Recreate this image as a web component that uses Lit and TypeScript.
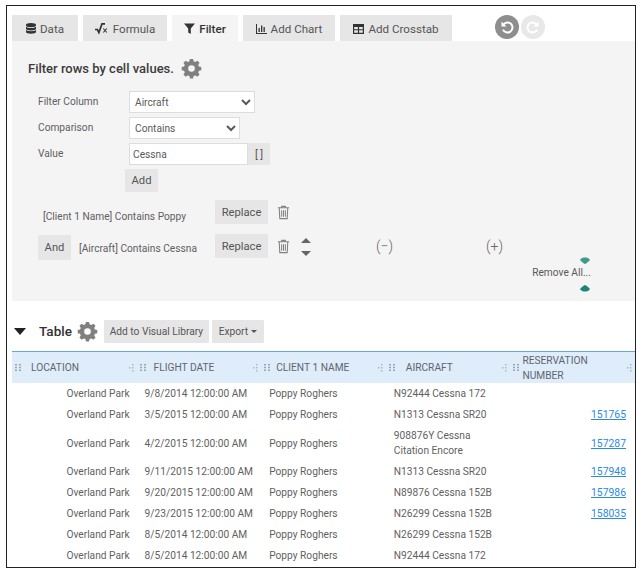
import { LitElement, html, css, svg } from 'lit';
import { customElement } from 'lit/decorators.js';

const gear = svg`<path d="M10.2 1h3.6l.6 2.700 1.900.8 2.400-1.500 2.500 2.500-1.500 2.400.8 1.900 2.700.6v3.600l-2.700.6-.8 1.900 1.500 2.400-2.500 2.500-2.400-1.500-1.900.8-.6 2.700h-3.600l-.6-2.700-1.900-.8-2.400 1.500-2.500-2.500 1.500-2.400-.8-1.900-2.700-.6v-3.600l2.700-.6.8-1.900-1.500-2.400 2.500-2.500 2.400 1.500 1.900-.8zM12 8.200a3.800 3.800 0 1 0 0 7.600 3.800 3.800 0 0 0 0-7.600z" fill-rule="evenodd"/>`;

const trash = html`<svg class="trash" viewBox="0 0 14 16" width="13" height="15">
  <path d="M1 3h12M5 3V1.400h4V3M2.400 3l.6 11.600h8L11.600 3M5 5.500v7M7 5.500v7M9 5.500v7" fill="none" stroke="#808080" stroke-width="1.100"/>
</svg>`;

const grip = html`<svg class="grip" viewBox="0 0 6 7" width="6" height="7">
  <path d="M0 0h2v1.500H0zM4 0h2v1.500H4zM0 2.700h2v1.500H0zM4 2.700h2v1.500H4zM0 5.400h2v1.500H0zM4 5.400h2v1.500H4z" fill="#9aa6b1"/>
</svg>`;

const resize = html`<svg class="resize" viewBox="0 0 5 8" width="5" height="8">
  <path d="M3 0h1.500v1.500H3zM3 3h1.500v1.500H3zM3 6h1.500v1.500H3zM0 3h1.500v1.500H0z" fill="#adb7c0"/>
</svg>`;

const rows = [
  ['9/8/2014 12:00:00 AM', 'N92444 Cessna 172', ''],
  ['3/5/2015 12:00:00 AM', 'N1313 Cessna SR20', '151765'],
  ['4/2/2015 12:00:00 AM', '908876Y Cessna Citation Encore', '157287'],
  ['9/11/2015 12:00:00 AM', 'N1313 Cessna SR20', '157948'],
  ['9/20/2015 12:00:00 AM', 'N89876 Cessna 152B', '157986'],
  ['9/23/2015 12:00:00 AM', 'N26299 Cessna 152B', '158035'],
  ['8/5/2014 12:00:00 AM', 'N26299 Cessna 152B', ''],
  ['8/5/2014 12:00:00 AM', 'N92444 Cessna 172', ''],
];

const columns = ['LOCATION', 'FLIGHT DATE', 'CLIENT 1 NAME', 'AIRCRAFT', 'RESERVATION NUMBER'];

@customElement('app-root')
export class AppRoot extends LitElement {
  static styles = css`
    :host {
      display: block;
      width: 644px;
      height: 572px;
      padding: 5px 8px 4px 6px;
      box-sizing: border-box;
      font-family: Roboto, "Liberation Sans", sans-serif;
      font-size: 10.2px;
      color: #5a5a5a;
    }
    .frame {
      height: 100%;
      box-sizing: border-box;
      border: 1px solid #222;
      padding: 9px 0 0 5px;
      overflow: hidden;
    }

    /* Tabs */
    .tabs {
      display: flex;
      height: 26px;
      gap: 5px;
    }
    .tab {
      display: flex;
      align-items: center;
      justify-content: center;
      gap: 4px;
      background: #e6e6e6;
      font-size: 11.6px;
      color: #555;
      padding-top: 1px;
      box-sizing: border-box;
    }
    .tab.active {
      background: #f4f4f4;
      color: #333;
      font-weight: 500;
    }
    .tab svg { fill: #333; }
    .history {
      display: flex;
      gap: 2px;
      margin-left: 38px;
      height: 24px;
    }
    .round {
      width: 24px;
      height: 24px;
      border-radius: 50%;
      background: #8e8e8e;
      display: flex;
      align-items: center;
      justify-content: center;
    }
    .round.off { background: #e8e8e8; }

    /* Filter panel */
    .panel {
      height: 260px;
      box-sizing: border-box;
      background: #f4f4f4;
      padding: 16px 0 0 16px;
      display: flex;
      flex-direction: column;
    }
    .title {
      display: flex;
      align-items: center;
      gap: 7px;
      height: 22px;
      font-size: 13px;
      font-weight: 500;
      color: #3c3c3c;
    }
    .gear { fill: #808080; }
    .form {
      display: grid;
      grid-template-columns: 91px auto;
      row-gap: 4px;
      margin: 12px 0 0 10px;
      justify-content: start;
    }
    .form label { line-height: 21px; color: #606060; }
    select, .input {
      height: 22px;
      box-sizing: border-box;
      border: 1px solid #ddd;
      background: #fff;
      font: inherit;
      color: #5a5a5a;
      padding: 0 0 0 1px;
      border-radius: 0;
    }
    .wide { width: 126px; }
    .narrow { width: 111px; }
    .value-row { display: flex; }
    .input { width: 119px; padding-left: 3px; line-height: 21px; }
    button {
      border: none;
      background: #e6e6e6;
      font: inherit;
      font-size: 11.2px;
      color: #555;
      padding: 0;
      border-radius: 1px;
    }
    .bracket { width: 22px; height: 22px; font-size: 10.5px; }
    .add { width: 33px; height: 23px; margin: 0 0 0 -4px; display: block; }

    .rule {
      display: flex;
      align-items: flex-start;
      margin-left: 10px;
      color: #606060;
    }
    .rule.first { margin-top: 8px; height: 24px; }
    .rule.second { margin-top: 11px; height: 26px; }
    .rule .text-one { margin-left: 5px; width: 172px; padding-top: 11px; }
    .rule .text-two { margin-left: 8px; width: 136px; padding-top: 8px; }
    .replace { width: 53px; height: 24px; }
    .rule.second .replace { margin-top: -1px; }
    .rule .trash { margin: 5px 0 0 9px; }
    .rule.second .trash { margin-top: 4px; }
    .sort { display: flex; flex-direction: column; gap: 8px; margin: 3px 0 0 11px; }
    .paren { color: #666; font-size: 14px; font-weight: 300; width: 16px; text-align: center; margin-top: 3px; }
    .minus { margin-left: 65px; }
    .plus { margin-left: 94px; }
    .remove {
      align-self: flex-end;
      display: flex;
      flex-direction: column;
      align-items: flex-end;
      margin: -4px 44px 0 0;
    }
    .remove span { margin: 3px 0 7px; }
    .remove svg { margin-right: 1px; }

    /* Table */
    .tools {
      display: flex;
      align-items: center;
      height: 23px;
      margin-top: 19px;
    }
    .caret { margin: 0 13px 0 2px; }
    .table-name { font-size: 13.5px; font-weight: 500; color: #333; margin: 0 5px 2px 0; }
    .tools button { height: 23px; font-size: 10.2px; }
    .library { width: 105px; margin: 0 3px 0 6px; }
    .export { width: 52px; }
    .export::after {
      content: "";
      display: inline-block;
      margin-left: 3px;
      vertical-align: 2px;
      border: 3px solid transparent;
      border-top-color: #555;
      border-bottom: none;
    }
    table {
      width: 623px;
      margin-top: 8px;
      border-collapse: collapse;
      table-layout: fixed;
    }
    th {
      height: 31px;
      padding: 0;
      background: #dfecfa;
      border-top: 1px solid #6aa5d8;
      font-weight: 400;
      font-size: 10.2px;
      line-height: 15px;
      color: #5e6670;
      text-align: left;
    }
    .head {
      display: flex;
      align-items: center;
      padding-left: 3px;
      padding-right: 3px;
    }
    .head .grip { flex: none; margin-right: 8px; }
    .head .name { flex: 1; }
    th:nth-child(1) .grip { margin-right: 10px; }
    th:nth-child(3) .grip { margin-right: 6px; }
    th:nth-child(4) .grip { margin-right: 11px; }
    th:nth-child(5) .grip { margin-right: 3px; }
    td {
      padding: 3px 8px;
      height: 15px;
      line-height: 15px;
      font-size: 10.2px;
      color: #5f5f5f;
      vertical-align: middle;
    }
    td.city { text-align: right; padding-right: 7px; }
    td.num { text-align: right; padding-right: 9px; }
    td.date { white-space: nowrap; }
    a { color: #2b8ae6; text-decoration: underline; font-size: 10.4px; }
  `;

  render() {
    return html`<div class="frame">
      <nav class="tabs">
        <div class="tab" style="width:66px">
          <svg viewBox="0 0 10 11" width="10" height="11"><path d="M5 0c2.800 0 5 .8 5 1.800v.7C10 3.500 7.800 4.200 5 4.200S0 3.500 0 2.500v-.7C0 .8 2.200 0 5 0zM0 3.800c1 .8 3 1.200 5 1.200s4-.4 5-1.200v2C10 6.700 7.800 7.400 5 7.400S0 6.700 0 5.800zM0 7c1 .8 3 1.200 5 1.200S9 7.800 10 7v2c0 1-2.200 1.700-5 1.700S0 10 0 9z"/></svg>
          Data
        </div>
        <div class="tab" style="width:84px">
          <svg viewBox="0 0 14 12" width="14" height="12"><path d="M0 6.500h2.400l1.500 3L7 .8h3" fill="none" stroke="#333" stroke-width="1.700"/><path d="M8.300 5.500l3.500 4M11.800 5.500l-3.500 4" stroke="#333" stroke-width="1.100"/></svg>
          Formula
        </div>
        <div class="tab active" style="width:66px">
          <svg viewBox="0 0 11 11" width="11" height="11"><path d="M0 .5h11L6.800 5.400V11L4.200 9.500V5.400z"/></svg>
          Filter
        </div>
        <div class="tab" style="width:92px">
          <svg viewBox="0 0 11 10" width="11" height="10"><path d="M0 0h1v9h10v1H0zM2.500 4h1.300v4H2.500zM5 1.500h1.300V8H5zM7.500 3h1.300v5H7.500z"/></svg>
          Add Chart
        </div>
        <div class="tab" style="width:112px">
          <svg viewBox="0 0 11 10" width="11" height="10"><path fill-rule="evenodd" d="M0 0h11v10H0zM1.200 3v2.200h3.700V3zM6.100 3v2.200h3.700V3zM1.200 6.300v2.500h3.700V6.300zM6.100 6.300v2.500h3.700V6.300z"/></svg>
          Add Crosstab
        </div>
        <div class="history">
          <div class="round">
            <svg viewBox="0 0 14 14" width="14" height="14"><path d="M3.500 4.500A5 5 0 1 1 3 9.600" fill="none" stroke="#fff" stroke-width="2"/><path d="M1.500 1.500v5h5z" fill="#fff"/></svg>
          </div>
          <div class="round off">
            <svg viewBox="0 0 14 14" width="14" height="14"><path d="M10.500 4.500A5 5 0 1 0 11 9.600" fill="none" stroke="#fff" stroke-width="2"/><path d="M12.500 1.500v5h-5z" fill="#fff"/></svg>
          </div>
        </div>
      </nav>

      <section class="panel">
        <div class="title">
          Filter rows by cell values.
          <svg class="gear" viewBox="0 0 24 24" width="21" height="21">${gear}</svg>
        </div>
        <div class="form">
          <label>Filter Column</label>
          <select class="wide"><option>Aircraft</option></select>
          <label>Comparison</label>
          <select class="narrow"><option>Contains</option></select>
          <label>Value</label>
          <div class="value-row">
            <div class="input">Cessna</div>
            <button class="bracket">[ ]</button>
          </div>
          <span></span>
          <button class="add">Add</button>
        </div>

        <div class="rule first">
          <span class="text-one">[Client 1 Name] Contains Poppy</span>
          <button class="replace">Replace</button>
          ${trash}
        </div>
        <div class="rule second">
          <button style="width:33px;height:25px">And</button>
          <span class="text-two">[Aircraft] Contains Cessna</span>
          <button class="replace">Replace</button>
          ${trash}
          <div class="sort">
            <svg viewBox="0 0 10 5" width="10" height="5"><path d="M5 0l5 5H0z" fill="#666"/></svg>
            <svg viewBox="0 0 10 5" width="10" height="5"><path d="M5 5L0 0h10z" fill="#666"/></svg>
          </div>
          <span class="paren minus">(−)</span>
          <span class="paren plus">(+)</span>
        </div>
        <div class="remove">
          <svg viewBox="0 0 10 7" width="10" height="7"><path d="M0 3C1 1 3 .5 5 .5S9 1 10 3C8 5 6.500 6.500 5 7 3.500 6.500 2 5 0 3z" fill="#3f9a8c"/></svg>
          <span>Remove All...</span>
          <svg viewBox="0 0 10 7" width="10" height="7"><path d="M0 4C2 2 3.500 .5 5 0c1.500.5 3 2 5 4-1 2-3 2.500-5 2.500S1 6 0 4z" fill="#1f8476"/></svg>
        </div>
      </section>

      <div class="tools">
        <svg class="caret" viewBox="0 0 12 7" width="12" height="7"><path d="M0 0h12L6 7z" fill="#222"/></svg>
        <span class="table-name">Table</span>
        <svg class="gear" viewBox="0 0 24 24" width="21" height="21">${gear}</svg>
        <button class="library">Add to Visual Library</button>
        <button class="export">Export</button>
      </div>

      <table>
        <thead>
          <tr>
            ${columns.map((c) => html`<th>
              <div class="head">
                ${grip}<span class="name">${c}</span>${resize}
              </div>
            </th>`)}
          </tr>
        </thead>
        <tbody>
          ${rows.map((r) => html`<tr>
            <td class="city">Overland Park</td>
            <td class="date">${r[0]}</td>
            <td>Poppy Roghers</td>
            <td>${r[1]}</td>
            <td class="num">${r[2] ? html`<a href="#">${r[2]}</a>` : ''}</td>
          </tr>`)}
        </tbody>
      </table>
    </div>`;
  }
}
